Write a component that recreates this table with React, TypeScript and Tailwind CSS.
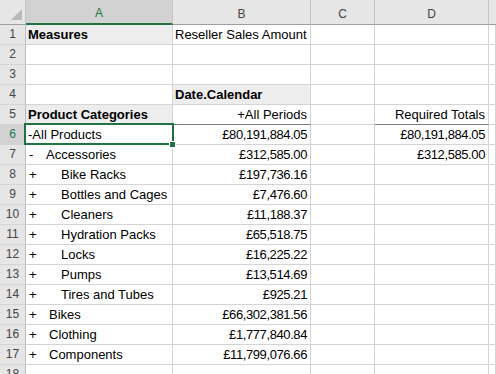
import React from 'react'

const font = { fontFamily: '"Liberation Sans", Arial, sans-serif' }

const tree = [
  { n: 7, sign: '-', label: 'Accessories', w: 'w-[17px]', b: '£312,585.00', d: '£312,585.00' },
  { n: 8, sign: '+', label: 'Bike Racks', w: 'w-[32px]', b: '£197,736.16' },
  { n: 9, sign: '+', label: 'Bottles and Cages', w: 'w-[32px]', b: '£7,476.60' },
  { n: 10, sign: '+', label: 'Cleaners', w: 'w-[32px]', b: '£11,188.37' },
  { n: 11, sign: '+', label: 'Hydration Packs', w: 'w-[32px]', b: '£65,518.75' },
  { n: 12, sign: '+', label: 'Locks', w: 'w-[32px]', b: '£16,225.22' },
  { n: 13, sign: '+', label: 'Pumps', w: 'w-[32px]', b: '£13,514.69' },
  { n: 14, sign: '+', label: 'Tires and Tubes', w: 'w-[32px]', b: '£925.21' },
  { n: 15, sign: '+', label: 'Bikes', w: 'w-[20px]', b: '£66,302,381.56' },
  { n: 16, sign: '+', label: 'Clothing', w: 'w-[20px]', b: '£1,777,840.84' },
  { n: 17, sign: '+', label: 'Components', w: 'w-[20px]', b: '£11,799,076.66' },
]

const grid = 'h-[20px] shrink-0 border-r border-b border-[#d4d4d4] text-[13px] leading-[19px] text-black whitespace-nowrap overflow-hidden'

function RowHead({ n, active }: { n: number; active?: boolean }) {
  return (
    <div
      className={`w-[26px] h-[20px] shrink-0 border-r border-b border-r-[#bdbdbd] border-b-[#d4d4d4] text-center text-[12px] leading-[19px] ${
        active ? 'bg-[#d2d2d2] text-[#217346]' : 'bg-[#e6e6e6] text-[#444]'
      }`}
    >
      {n}
    </div>
  )
}

function Row({ n, active, children }: { n: number; active?: boolean; children: React.ReactNode }) {
  return (
    <div className="flex">
      <RowHead n={n} active={active} />
      {children}
    </div>
  )
}

function Empty({ w }: { w: string }) {
  return <div className={`${grid} ${w}`} />
}

function Num({ v, w, dark }: { v?: string; w: string; dark?: boolean }) {
  return (
    <div className={`${grid} ${w} pr-[3px] text-right tracking-[-0.4px] ${dark ? 'border-b-[#7a7a7a]' : ''}`}>{v}</div>
  )
}

export default function App() {
  return (
    <div className="w-[496px] h-[374px] overflow-hidden bg-white relative" style={font}>
      {/* column headers */}
      <div className="flex h-[25px] bg-[#e6e6e6] text-[12px] text-[#444]">
        <div className="w-[26px] shrink-0 border-r border-b border-r-[#c6c6c6] border-b-[#9e9e9e]">
          <svg width="25" height="24" viewBox="0 0 25 24">
            <polygon points="22,9 22,20 11,20" fill="#b9b9b9" />
          </svg>
        </div>
        <div className="w-[147px] shrink-0 flex items-center justify-center pt-[3px] bg-[#d2d2d2] text-[#217346] border-r border-r-[#c6c6c6] border-b-2 border-b-[#217346]">A</div>
        <div className="w-[138px] shrink-0 flex items-center justify-center pt-[3px] border-r border-r-[#c6c6c6] border-b border-b-[#9e9e9e]">B</div>
        <div className="w-[64px] shrink-0 flex items-center justify-center pt-[3px] border-r border-r-[#c6c6c6] border-b border-b-[#9e9e9e]">C</div>
        <div className="w-[114px] shrink-0 flex items-center justify-center pt-[3px] border-r border-r-[#c6c6c6] border-b border-b-[#9e9e9e]">D</div>
        <div className="flex-1 border-b border-b-[#9e9e9e]" />
      </div>

      <Row n={1}>
        <div className={`${grid} w-[147px] pl-[2px] font-bold bg-[#ededed]`}>Measures</div>
        <div className={`${grid} w-[138px] pl-[2px]`}>Reseller Sales Amount</div>
        <Empty w="w-[64px]" />
        <Empty w="w-[114px]" />
        <Empty w="flex-1" />
      </Row>
      {[2, 3].map(n => (
        <Row key={n} n={n}>
          <Empty w="w-[147px]" />
          <Empty w="w-[138px]" />
          <Empty w="w-[64px]" />
          <Empty w="w-[114px]" />
          <Empty w="flex-1" />
        </Row>
      ))}
      <Row n={4}>
        <Empty w="w-[147px]" />
        <div className={`${grid} w-[138px] pl-[2px] font-bold bg-[#ededed]`}>Date.Calendar</div>
        <Empty w="w-[64px]" />
        <Empty w="w-[114px]" />
        <Empty w="flex-1" />
      </Row>
      <Row n={5}>
        <div className={`${grid} w-[147px] pl-[2px] font-bold bg-[#ededed] border-b-[#7a7a7a]`}>Product Categories</div>
        <div className={`${grid} w-[138px] pr-[3px] text-right border-b-[#7a7a7a]`}>+All Periods</div>
        <Empty w="w-[64px]" />
        <div className={`${grid} w-[114px] pr-[3px] text-right border-b-[#7a7a7a]`}>Required Totals</div>
        <Empty w="flex-1" />
      </Row>
      <Row n={6} active>
        <div className={`${grid} w-[147px] pl-[2px]`}>-All Products</div>
        <Num w="w-[138px]" v="£80,191,884.05" />
        <Empty w="w-[64px]" />
        <Num w="w-[114px]" v="£80,191,884.05" />
        <Empty w="flex-1" />
      </Row>
      {tree.map(r => (
        <Row key={r.n} n={r.n}>
          <div className={`${grid} w-[147px] pl-[3px] flex`}>
            <span className={`${r.w} shrink-0`}>{r.sign}</span>
            <span>{r.label}</span>
          </div>
          <Num w="w-[138px]" v={r.b} />
          <Empty w="w-[64px]" />
          <Num w="w-[114px]" v={r.d} />
          <Empty w="flex-1" />
        </Row>
      ))}
      <Row n={18}>
        <Empty w="w-[147px]" />
        <Empty w="w-[138px]" />
        <Empty w="w-[64px]" />
        <Empty w="w-[114px]" />
        <Empty w="flex-1" />
      </Row>

      {/* active cell selection */}
      <div className="absolute left-[24px] top-[123px] w-[150px] h-[22px] border-2 border-[#217346] pointer-events-none" />
      <div className="absolute left-[169px] top-[141px] w-[7px] h-[7px] bg-[#217346] border border-white" />
    </div>
  )
}
